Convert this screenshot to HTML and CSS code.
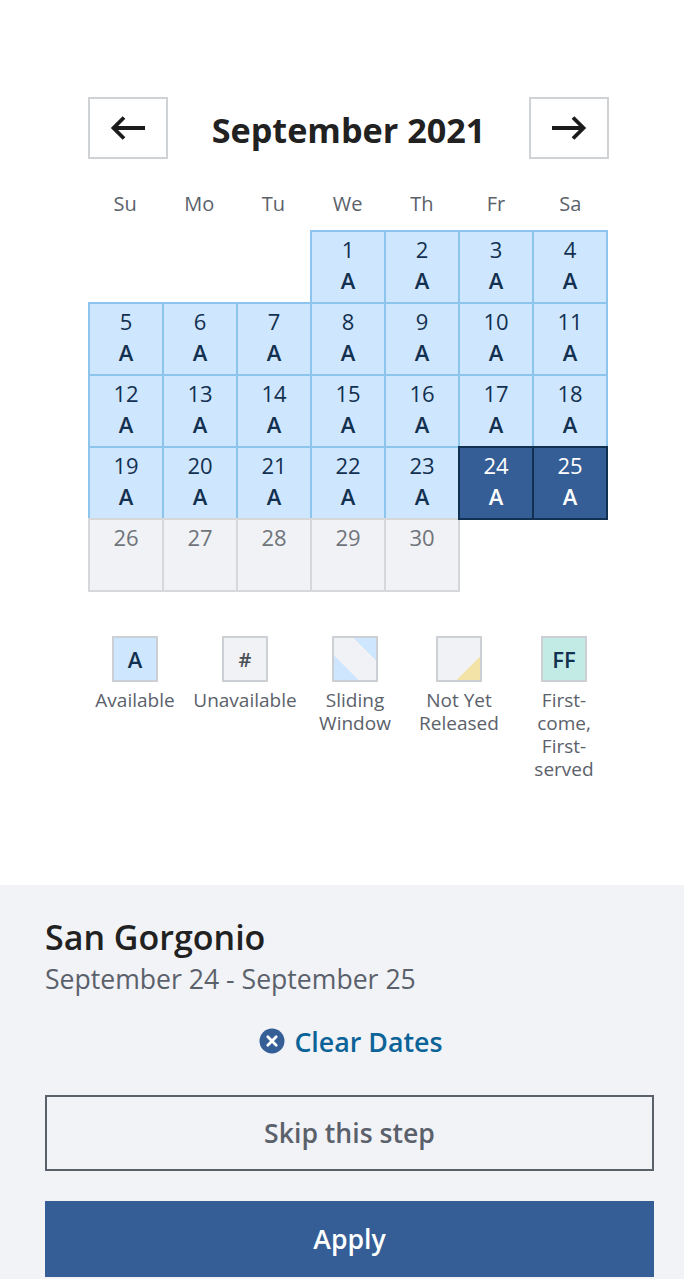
FILE: index.html
```html
<!DOCTYPE html>
<html lang="en">
<head>
    <meta charset="UTF-8">
    <meta name="viewport" content="width=device-width, initial-scale=1.0">
    <title>Select Dates</title>
    <link rel="stylesheet" href="styles.css">
</head>
<body>
    <div class="calendar">
        <div class="monthBar">
            <button class="navBtn">
                <svg width="36" height="26" viewBox="0 0 36 26"><path d="M35 13H4M14 2.500L3.500 13L14 23.500" fill="none" stroke="#1b1b1b" stroke-width="3.800"/></svg>
            </button>
            <div class="month">September 2021</div>
            <button class="navBtn">
                <svg width="36" height="26" viewBox="0 0 36 26"><path d="M1 13H32M22 2.500L32.500 13L22 23.500" fill="none" stroke="#1b1b1b" stroke-width="3.800"/></svg>
            </button>
        </div>
        <div class="weekdays">
            <div>Su</div><div>Mo</div><div>Tu</div><div>We</div><div>Th</div><div>Fr</div><div>Sa</div>
        </div>
        <div class="days">
            <div class="day blank"></div><div class="day blank"></div><div class="day blank"></div>
            <div class="day open">1<b>A</b></div>
            <div class="day open">2<b>A</b></div>
            <div class="day open">3<b>A</b></div>
            <div class="day open">4<b>A</b></div>
            <div class="day open">5<b>A</b></div>
            <div class="day open">6<b>A</b></div>
            <div class="day open">7<b>A</b></div>
            <div class="day open">8<b>A</b></div>
            <div class="day open">9<b>A</b></div>
            <div class="day open">10<b>A</b></div>
            <div class="day open">11<b>A</b></div>
            <div class="day open">12<b>A</b></div>
            <div class="day open">13<b>A</b></div>
            <div class="day open">14<b>A</b></div>
            <div class="day open">15<b>A</b></div>
            <div class="day open">16<b>A</b></div>
            <div class="day open">17<b>A</b></div>
            <div class="day open">18<b>A</b></div>
            <div class="day open">19<b>A</b></div>
            <div class="day open">20<b>A</b></div>
            <div class="day open">21<b>A</b></div>
            <div class="day open">22<b>A</b></div>
            <div class="day open">23<b>A</b></div>
            <div class="day picked">24<b>A</b></div>
            <div class="day picked">25<b>A</b></div>
            <div class="day closed">26</div>
            <div class="day closed">27</div>
            <div class="day closed">28</div>
            <div class="day closed">29</div>
            <div class="day closed">30</div>
        </div>
        <div class="legend">
            <div class="key">
                <div class="swatch swAvail">A</div>
                <div class="keyText">Available</div>
            </div>
            <div class="key">
                <div class="swatch swUnavail">#</div>
                <div class="keyText">Unavailable</div>
            </div>
            <div class="key">
                <div class="swatch swSliding"></div>
                <div class="keyText">Sliding<br>Window</div>
            </div>
            <div class="key">
                <div class="swatch swNotYet"></div>
                <div class="keyText">Not Yet<br>Released</div>
            </div>
            <div class="key">
                <div class="swatch swFirst">FF</div>
                <div class="keyText">First-<br>come,<br>First-<br>served</div>
            </div>
        </div>
    </div>

    <div class="panel">
        <div class="place">San Gorgonio</div>
        <div class="range">September 24 - September 25</div>
        <div class="clear">
            <svg width="26" height="26" viewBox="0 0 26 26"><circle cx="13" cy="13" r="12.500" fill="#355e96"/><path d="M8.800 8.800L17.200 17.200M17.200 8.800L8.800 17.200" stroke="#fff" stroke-width="2.800" stroke-linecap="round"/></svg>
            <span>Clear Dates</span>
        </div>
        <button class="wide skip">Skip this step</button>
        <button class="wide apply">Apply</button>
    </div>
</body>
</html>
```
FILE: styles.css
```css
*{
    margin:0;
    padding:0;
    box-sizing:border-box;
}

body{
    font-family:"Open Sans",sans-serif;
    background-color:#fff;
    color:#1b1b1b;
    height:1279px;
    overflow:hidden;
}

.calendar{
    height:885px;
    padding:97px 0 0 88px;
}

.monthBar{
    display:flex;
    justify-content:space-between;
    align-items:center;
    width:521px;
}
.navBtn{
    display:flex;
    justify-content:center;
    align-items:center;
    width:80px;
    height:62px;
    background-color:#fff;
    border:2px solid #d0d3d6;
}
.month{
    padding-top:2px;
    font-size:34.200px;
    font-weight:700;
    color:#212121;
}

.weekdays{
    display:grid;
    grid-template-columns:repeat(7,74.200px);
    margin-top:30px;
    height:41px;
    font-size:20px;
    line-height:30px;
    text-align:center;
    color:#5b616b;
}

.days{
    display:grid;
    grid-template-columns:repeat(7,74px);
    grid-auto-rows:72px;
}
.day{
    width:76px;
    height:74px;
    padding-top:2px;
    border:2px solid;
    font-size:22px;
    line-height:30px;
    text-align:center;
}
.day b{
    display:block;
    font-weight:600;
    font-size:22px;
    line-height:32px;
}
.blank{
    border:none;
}
.open{
    background-color:#cfe6ff;
    border-color:#8ec5ee;
    color:#12304f;
}
.picked{
    position:relative;
    background-color:#355e96;
    border-color:#12304f;
    color:#fff;
}
.closed{
    background-color:#f1f2f5;
    border-color:#d6d7d9;
    color:#6f747b;
}

.legend{
    display:grid;
    grid-template-columns:110px 110px 110px 98px 112px;
    margin:46px 0 0 -8px;
}
.key{
    display:flex;
    flex-direction:column;
    align-items:center;
}
.swatch{
    display:flex;
    justify-content:center;
    align-items:center;
    width:46px;
    height:46px;
    border:2px solid #ccd0d4;
    font-size:22px;
    font-weight:600;
    color:#12304f;
}
.swAvail{
    background-color:#cfe6ff;
}
.swUnavail{
    background-color:#f1f2f5;
    font-size:20px;
    color:#494f57;
}
.swSliding{
    background:linear-gradient(45deg,#cfe6ff 0 29%,#f1f2f5 29% 73%,#cfe6ff 73%);
}
.swNotYet{
    background:linear-gradient(135deg,#f1f2f5 0 72%,#f4e3a6 72%);
}
.swFirst{
    background-color:#c3ebe6;
    color:#12304f;
}
.keyText{
    margin-top:7px;
    font-size:19px;
    line-height:23px;
    text-align:center;
    color:#5b616b;
}

.panel{
    height:394px;
    padding:28px 30px 0 45px;
    background-color:#f1f3f7;
}
.place{
    font-size:34px;
    font-weight:600;
    line-height:48px;
    color:#212121;
}
.range{
    font-size:26.600px;
    line-height:36px;
    color:#5b616b;
}
.clear{
    display:flex;
    justify-content:center;
    align-items:center;
    gap:9px;
    margin-top:24px;
    padding-left:3px;
    height:40px;
    font-size:26.800px;
    font-weight:600;
    color:#0b6398;
}
.wide{
    display:block;
    width:609px;
    height:76px;
    font-family:"Open Sans",sans-serif;
    font-size:26.600px;
    font-weight:600;
}
.skip{
    margin-top:34px;
    background-color:transparent;
    border:2px solid #5b616b;
    color:#5b616b;
}
.apply{
    margin-top:30px;
    background-color:#355e96;
    border:none;
    color:#fff;
}
```
